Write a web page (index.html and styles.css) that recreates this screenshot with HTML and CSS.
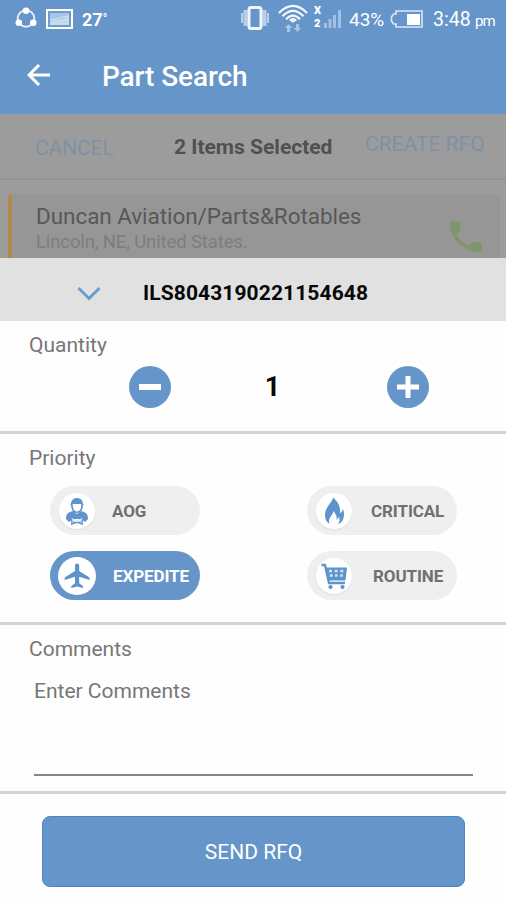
FILE: index.html
```
<!DOCTYPE html>
<html lang="en">
<head>
<meta charset="utf-8">
<title>Part Search</title>
<link rel="stylesheet" href="styles.css">
</head>
<body>
<header class="top">
  <div class="status">
    <svg class="ic-share" width="22" height="22" viewBox="0 0 22 22"><circle cx="11" cy="11.5" r="8.3" fill="none" stroke="#e4eefa" stroke-width="2"/><circle cx="11" cy="3.8" r="3.3" fill="#fff"/><circle cx="3.8" cy="15.8" r="3.3" fill="#fff"/><circle cx="18.2" cy="15.8" r="3.3" fill="#fff"/></svg>
    <svg class="ic-photo" width="27" height="20" viewBox="0 0 27 20"><rect x="1" y="1" width="25" height="18" fill="#6e9ccd" stroke="#fff" stroke-width="2"/><rect x="4" y="4" width="19" height="12" fill="#a6c4e3"/><path d="M4 13c5-4 9 0 19-6v9H4z" fill="#c6daef"/><path d="M4 10c6 2 10-3 19-3" fill="none" stroke="#dce8f5"/></svg>
    <span class="temp">27<span class="deg">°</span></span>
    <svg class="ic-vibrate" width="30" height="26" viewBox="0 0 30 26"><path d="M2 8v10M28 8v10" stroke="#b8cfe9" stroke-width="2"/><path d="M5.500 5v16M24.500 5v16" stroke="#b8cfe9" stroke-width="4"/><rect x="9" y="2.500" width="12" height="21" rx="2" fill="#6595c9" stroke="#f2f7fd" stroke-width="3"/></svg>
    <svg class="ic-wifi" width="30" height="29" viewBox="0 0 30 29"><g fill="none" stroke="#f4f8fd" stroke-width="2.200"><path d="M1 9Q15-5 29 9"/><path d="M4.500 12.300Q15 1.500 25.500 12.300"/><path d="M8 15.300Q15 8 22 15.300"/></g><path d="M11 16Q15 12 19 16L15 19z" fill="#f4f8fd"/><path d="M10.500 20l3.800 4h-2.300v4h-3v-4H6.700zM19.500 28l3.800-4H21v-4h-3v4h-2.300z" fill="#a9c5e4"/></svg>
    <span class="sim"><span>X</span><span>2</span></span>
    <svg class="ic-signal" width="18" height="18" viewBox="0 0 18 18"><path d="M1.500 18v-5M6 18V9M10.500 18V5M15.500 18V0" stroke="#a3c0e2" stroke-width="3"/></svg>
    <span class="pct">43%</span>
    <svg class="ic-batt" width="33" height="18" viewBox="0 0 33 18"><path d="M6 1h26v16H6v-3H3.500L1.500 11V7l2-3H6z" fill="none" stroke="#dce8f6" stroke-width="1.600"/><rect x="17" y="4" width="13" height="11" fill="#fff"/></svg>
    <span class="time">3:48</span><span class="pm">pm</span>
  </div>
  <div class="appbar">
    <svg class="back" width="24" height="22" viewBox="0 0 24 22"><path d="M12 1L2 11l10 10M2 11h21" fill="none" stroke="#fff" stroke-width="3"/></svg>
    <h1>Part Search</h1>
  </div>
</header>

<section class="dimmed">
  <div class="selection">
    <span class="cancel">CANCEL</span>
    <span class="count">2 Items Selected</span>
    <span class="create">CREATE RFQ</span>
  </div>
  <div class="card">
    <div class="vendor">
      <div class="name">Duncan Aviation/Parts&amp;Rotables</div>
      <div class="place">Lincoln, NE, United States.</div>
    </div>
    <svg class="phone" width="32" height="31" viewBox="3 3 18 18" preserveAspectRatio="none"><path d="M6.620 10.790c1.440 2.830 3.760 5.140 6.590 6.590l2.200-2.200c.27-.27.670-.36 1.020-.24 1.120.37 2.330.57 3.570.57.550 0 1 .45 1 1V20c0 .55-.45 1-1 1-9.390 0-17-7.610-17-17 0-.55.450-1 1-1h3.500c.55 0 1 .45 1 1 0 1.250.2 2.450.57 3.570.11.350.03.740-.25 1.020l-2.200 2.200z" fill="#7f966b"/></svg>
  </div>
</section>

<main class="sheet">
  <div class="sheet-head">
    <svg class="chev" width="24" height="15" viewBox="0 0 24 15"><path d="M1.500 2L12 12.500 22.500 2" fill="none" stroke="#6a9bd0" stroke-width="3"/></svg>
    <span class="rfq">ILS8043190221154648</span>
  </div>

  <section class="block quantity">
    <h2>Quantity</h2>
    <div class="stepper">
      <button class="round" aria-label="Decrease"><svg width="42" height="42" viewBox="0 0 42 42"><path d="M10 21h22" stroke="#fff" stroke-width="6"/></svg></button>
      <span class="qty">1</span>
      <button class="round" aria-label="Increase"><svg width="42" height="42" viewBox="0 0 42 42"><path d="M10 21h22M21 10v22" stroke="#fff" stroke-width="5"/></svg></button>
    </div>
  </section>

  <section class="block priority">
    <h2 class="tight">Priority</h2>
    <div class="options">
      <div class="pill aog"><i class="disc"><svg width="36" height="36" viewBox="0 0 36 36"><g fill="#5f93cb"><path d="M12 11c0-8 12-8 12 0l1 1H11z"/><path d="M12 11h12c0 6-2.500 9-6 9s-6-3-6-9z"/><path d="M7 26c0-6 3-7 7-8l4 3 4-3c4 1 7 2 7 8l-3 3-4-3h-8l-4 3z"/><path d="M12 27l6 2 6-2v5l-6-2-6 2z"/></g><path d="M13.700 11h8.600c0 5-1.500 7.500-4.300 7.500s-4.300-2.500-4.300-7.500z" fill="#fff"/><path d="M12.500 25.500l11 4M23.500 25.500l-11 4" stroke="#d8e6f5"/></svg></i><span>AOG</span></div>
      <div class="pill critical"><i class="disc"><svg width="36" height="36" viewBox="0 0 36 36"><path d="M17 4.500c-1 6-8 9-8 18 0 4 2 7 4.500 8.500-2-6 3-8 4-13 3 4 3.500 6 3 9l2.500-3c1 3 .5 5-1 7 4-1 6-5 6-10 0-2-.5-4-1-5-1 3-2 4-3 4 1-7-3-12-7-15.500z" fill="#5f93cb"/></svg></i><span>CRITICAL</span></div>
      <div class="pill expedite active"><i class="disc"><svg width="38" height="38" viewBox="0 0 38 38"><path d="M31.500 23v-2.600l-10.300-6.500V8.500a2.100 2.100 0 0 0-4.200 0v5.400L6.700 20.400V23L17 19.800v6.500l-3.700 2.800v2l5.800-1.600 5.800 1.600v-2l-3.700-2.800v-6.500z" fill="#5f93cb"/></svg></i><span>EXPEDITE</span></div>
      <div class="pill routine"><i class="disc"><svg width="36" height="36" viewBox="0 0 36 36"><path d="M5.500 7H9l4 18h16" fill="none" stroke="#5f93cb" stroke-width="2.400"/><path d="M9 9.500h22l-1.500 13H12z" fill="#5f93cb"/><path d="M13 13h3M18.700 13h3M24.300 13h3M13.800 17.500h3M19 17.500h2.700M24.200 17.500h2.700" stroke="#d3e2f2" stroke-width="2.600"/><circle cx="14.500" cy="29" r="2.100" fill="#5f93cb"/><circle cx="26.500" cy="29" r="2.100" fill="#5f93cb"/></svg></i><span>ROUTINE</span></div>
    </div>
  </section>

  <section class="block comments">
    <h2>Comments</h2>
    <div class="field">Enter Comments</div>
  </section>

  <footer class="actions"><button class="send">SEND RFQ</button></footer>
</main>
</body>
</html>
```
FILE: styles.css
```
* { box-sizing: border-box; }

body {
  margin: 0;
  width: 506px;
  height: 900px;
  overflow: hidden;
  background: #fefefe;
  font-family: Roboto, "Liberation Sans", sans-serif;
  color: #777;
}

svg { display: block; flex: none; }
span, h1, h2 { white-space: nowrap; }
button { border: 0; padding: 0; font: inherit; }

.top { height: 114px; background: #6595c9; color: #fff; }

.status { display: flex; align-items: center; height: 38px; padding-left: 15px; }
.status > span { flex: none; }
.ic-share { margin-top: -2px; }
.ic-photo { margin-left: 9px; }
.temp { width: 158px; margin-left: 9px; font-size: 18px; font-weight: 700; line-height: 38px; }
.deg { font-size: 12px; vertical-align: 3px; }
.ic-vibrate { margin-top: -2px; }
.ic-wifi { margin: -2px 0 0 8px; }
.sim { display: flex; flex-direction: column; width: 8px; margin: -5px 0 0 6px; font-size: 11px; font-weight: 900; line-height: 13px; }
.ic-signal { margin-left: 2px; }
.pct { width: 38px; margin-left: 7px; font-size: 19px; }
.ic-batt { margin-left: 3px; }
.time { width: 39px; margin-left: 10px; font-size: 19.5px; }
.pm { margin: 4px 0 0 3px; font-size: 15px; letter-spacing: -1px; }

.appbar { display: flex; align-items: center; height: 76px; padding-left: 27px; }
.back { margin-top: -3px; }
h1 { margin: 2px 0 0 51px; font-size: 28px; font-weight: 500; line-height: 76px; letter-spacing: -0.1px; }

.dimmed { height: 144px; background: #9c9c9c; overflow: hidden; }
.selection { display: flex; height: 66px; padding-left: 35px; border-bottom: 2px solid #949494; font-size: 21px; line-height: 64px; color: #7e91a5; }
.cancel { width: 139px; padding-top: 2px; letter-spacing: -0.1px; }
.count { width: 191px; padding-top: 1px; font-weight: 700; color: #505050; }
.create { margin-top: -2px; }

.card { display: flex; height: 80px; margin: 14px 6px 0 8px; border-left: 4px solid #b18a4b; border-radius: 4px; background: #969696; }
.vendor { width: 414px; padding: 9px 0 0 24px; }
.name { font-size: 22.5px; line-height: 27px; letter-spacing: -0.06px; color: #585858; }
.place { font-size: 18.5px; line-height: 24px; letter-spacing: -0.12px; color: #7d7d7d; }
.phone { margin: 27px 0 0 24px; }

.sheet-head { display: flex; align-items: center; height: 63px; padding-left: 77px; background: #e1e1e1; }
.chev { margin-top: 7px; }
.rfq { margin: 6px 0 0 42px; font-size: 21px; font-weight: 700; line-height: 30px; letter-spacing: 0.1px; color: #080808; }

.block { border-bottom: 3px solid #d3d3d3; }
h2 { margin: 0 0 0 29px; font-size: 21px; font-weight: 400; line-height: 28px; color: #777; }

.quantity { height: 113px; padding-top: 10px; }
.stepper { display: flex; align-items: center; justify-content: space-between; width: 300px; margin: 7px 0 0 129px; }
.round { width: 42px; height: 42px; border-radius: 50%; background: #6595c9; }
.qty { font-size: 27px; font-weight: 700; color: #080808; margin-right: 13px; }

.priority { height: 191px; padding-top: 10px; }
.options { display: grid; grid-template-columns: 150px 150px; gap: 16px 107px; margin: 14px 0 0 50px; }
.pill { display: flex; align-items: center; height: 49px; padding-left: 9px; border-radius: 25px; background: #efefef; font-size: 17px; font-weight: 700; color: #707070; }
.disc { display: flex; align-items: center; justify-content: center; width: 36px; height: 36px; border-radius: 50%; background: #fff; box-shadow: 0 1px 2px #ddd; flex: none; }
.pill span { margin: 0 0 0 17px; letter-spacing: -0.1px; }
.pill.critical span { margin-left: 19px; }
.pill.routine span { margin-left: 21px; }
.active { padding-left: 8px; background: #6595c9; color: #fff; }
.active .disc { width: 38px; height: 38px; box-shadow: none; }

.comments { height: 169px; padding-top: 10px; }
.field { width: 439px; height: 100px; margin: 13px 0 0 34px; padding-top: 1px; border-bottom: 2px solid #858585; font-size: 21px; line-height: 28px; }

.actions { padding: 22px 0 0 42px; }
.send { display: block; width: 423px; height: 71px; border: 1px solid #4c87c4; border-radius: 8px; background: #6595c9; font-size: 21px; color: #fff; }
```
